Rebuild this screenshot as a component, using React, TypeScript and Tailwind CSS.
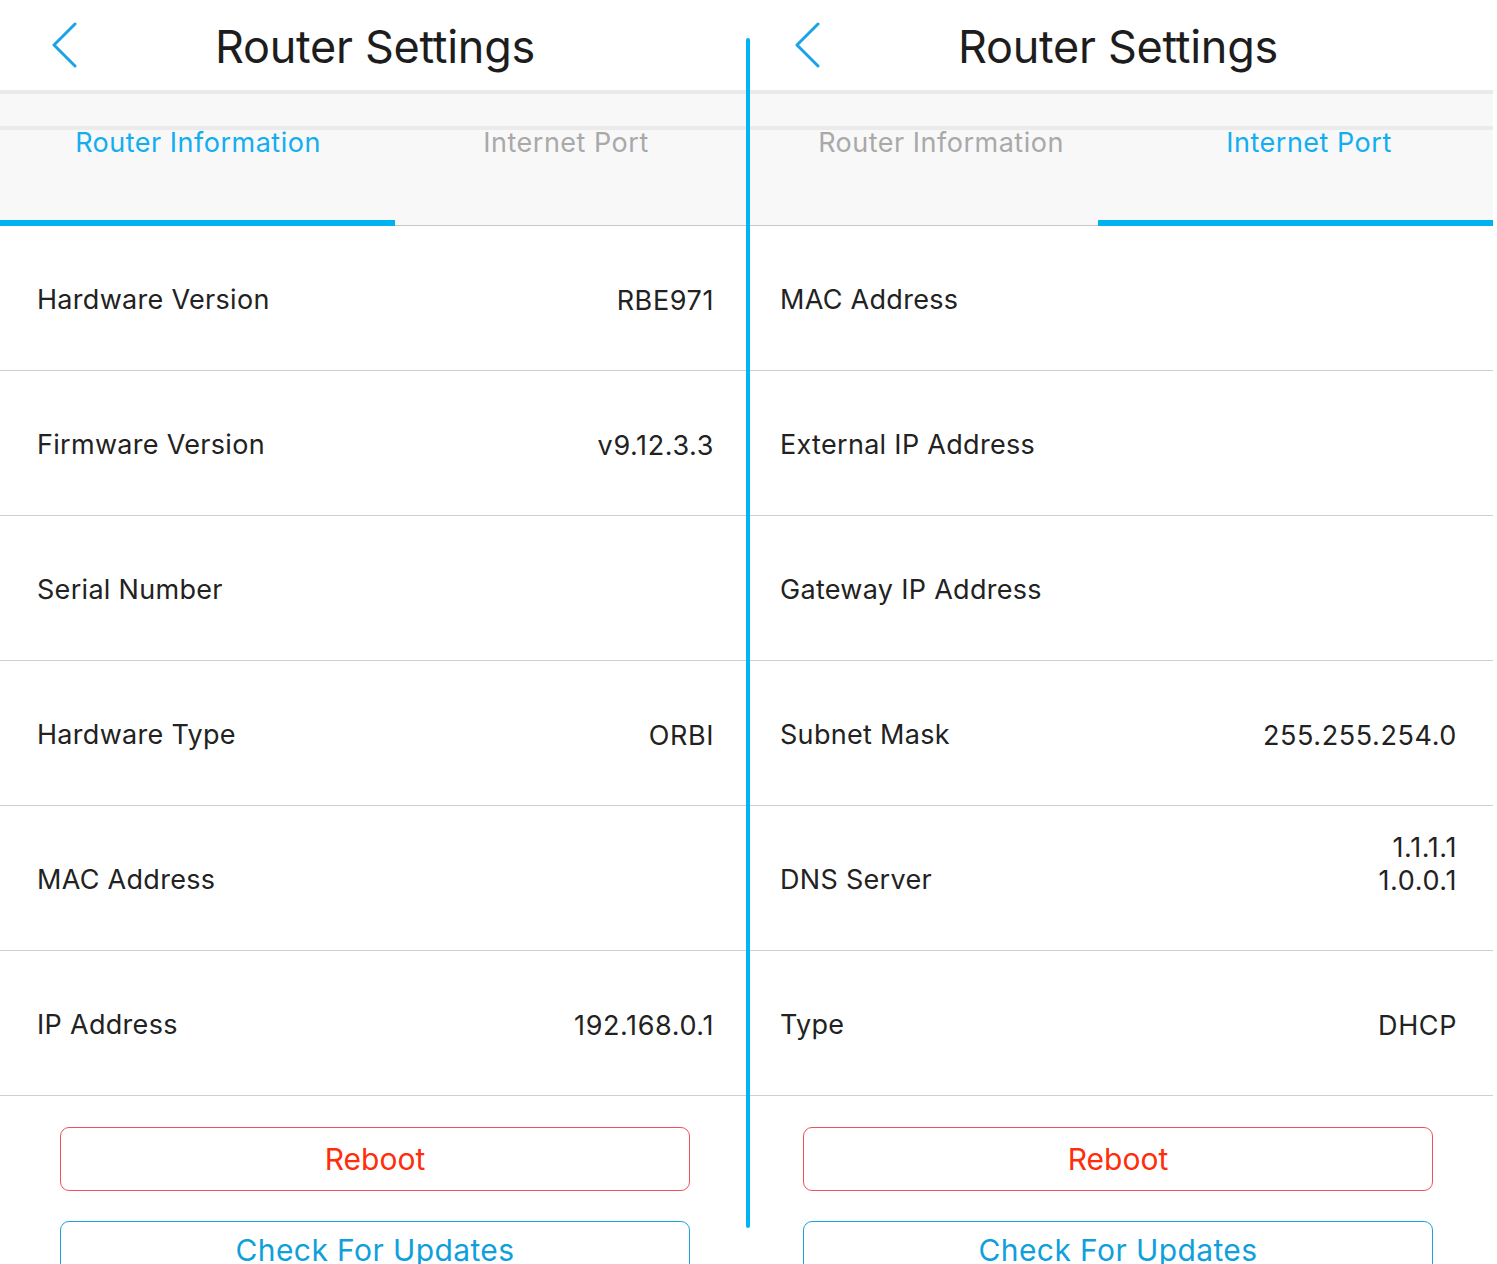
import React from 'react';

type Row = { label: string; value?: string[] };

const infoRows: Row[] = [
  { label: 'Hardware Version', value: ['RBE971'] },
  { label: 'Firmware Version', value: ['v9.12.3.3'] },
  { label: 'Serial Number' },
  { label: 'Hardware Type', value: ['ORBI'] },
  { label: 'MAC Address' },
  { label: 'IP Address', value: ['192.168.0.1'] },
];

const portRows: Row[] = [
  { label: 'MAC Address' },
  { label: 'External IP Address' },
  { label: 'Gateway IP Address' },
  { label: 'Subnet Mask', value: ['255.255.254.0'] },
  { label: 'DNS Server', value: ['1.1.1.1', '1.0.0.1'] },
  { label: 'Type', value: ['DHCP'] },
];

const BackChevron = () => (
  <svg width="30" height="46" viewBox="0 0 30 46" fill="none">
    <path d="M25 2 L4 23 L25 44" stroke="#1aa3e6" strokeWidth="3" strokeLinecap="round" strokeLinejoin="round" />
  </svg>
);

const Panel = ({ active, rows, className }: { active: 0 | 1; rows: Row[]; className?: string }) => {
  return (
    <div className={`w-[750px] shrink-0 bg-white ${className ?? ''}`}>
      {/* Nav bar */}
      <div className="relative h-[90px] flex items-center justify-center">
        <div className="absolute left-[50px] top-[22px]">
          <BackChevron />
        </div>
        <h1 className="text-[45px] text-[#1d1d1d] tracking-[-0.3px] mt-[4px]">Router Settings</h1>
      </div>

      {/* Tabs */}
      <div className="h-[4px] bg-[#e9eaeb]" />
      <div className="h-[32px] bg-[#f8f8f9]" />
      <div className="h-[4px] bg-[#ebebec]" />
      <div className="relative h-[96px] bg-[#f8f8f9] border-b border-[#c8c8c8]">
        <div className="flex">
          <div className="w-[396px] text-center">
            <span className={`inline-block text-[27px] leading-[26px] tracking-[0.5px] ${active === 0 ? 'text-[#12aef0]' : 'text-[#a9a9a9]'}`}>Router Information</span>
          </div>
          <div className="w-[340px] text-center">
            <span className={`inline-block text-[27px] leading-[26px] tracking-[0.5px] ${active === 1 ? 'text-[#12aef0]' : 'text-[#a9a9a9]'}`}>Internet Port</span>
          </div>
        </div>
        <div className={`absolute bottom-[-1px] h-[6px] w-[395px] bg-[#00b2f0] ${active === 0 ? 'left-0' : 'left-[355px]'}`} />
      </div>

      {/* Rows */}
      {rows.map((row) => (
        <div key={row.label} className="h-[145px] flex items-center justify-between pl-[37px] pr-[36px] pt-[5px] border-b border-[#cfcfcf]">
          <span className="text-[27px] text-[#222] tracking-[0.3px]">{row.label}</span>
          {row.value && (
            <div className={`text-right text-[27px] leading-[33px] text-[#222] tracking-[0.6px] ${row.value.length > 1 ? '-mt-[33px]' : ''}`}>
              {row.value.map((v) => (
                <div key={v}>{v}</div>
              ))}
            </div>
          )}
        </div>
      ))}

      {/* Buttons */}
      <div className="px-[60px] pt-[31px] flex flex-col gap-[30px]">
        <button className="h-[64px] w-[630px] rounded-[9px] border border-[#f0525c] text-[30px] text-[#ff2d0a]">Reboot</button>
        <button className="h-[64px] w-[630px] rounded-[9px] border border-[#1aa3dc] text-[30px] tracking-[0.4px] text-[#0fa0dc] pb-[6px]">Check For Updates</button>
      </div>
    </div>
  );
};

export default function App() {
  return (
    <div className="relative w-[1497px] h-[1264px] overflow-hidden bg-white font-['Inter','Liberation_Sans',sans-serif]">
      <div className="flex">
        <Panel active={0} rows={infoRows} />
        <Panel active={1} rows={portRows} className="-ml-[7px]" />
      </div>
      <div className="absolute left-[746px] top-[38px] h-[1190px] w-[4px] rounded-full bg-[#00b4f4]" />
    </div>
  );
}
